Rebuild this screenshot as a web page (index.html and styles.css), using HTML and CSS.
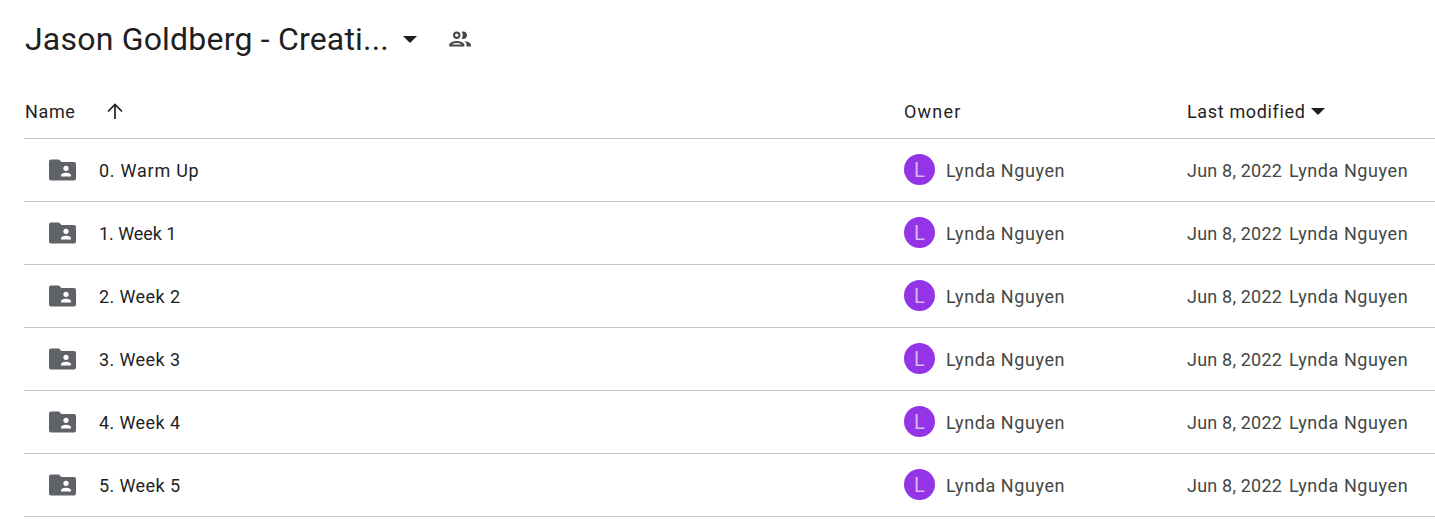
FILE: index.html
```html
<!DOCTYPE html>
<html lang="en">
<head>
<meta charset="utf-8">
<title>Jason Goldberg - Creative</title>
<link rel="stylesheet" href="styles.css">
</head>
<body>
<header class="crumb">
  <h1 class="title">Jason Goldberg - Creati...</h1>
  <svg class="title-caret" width="14" height="7" viewBox="0 0 14 7"><path d="M0 0h14L7 7z"/></svg>
  <svg class="people" width="26" height="26" viewBox="0 0 24 24"><path d="M9 13.750c-2.340 0-7 1.170-7 3.500V19h14v-1.750c0-2.330-4.660-3.500-7-3.500zM4.340 17c.84-.58 2.870-1.250 4.660-1.250s3.820.67 4.660 1.250H4.340zM9 12c1.930 0 3.500-1.570 3.500-3.500S10.930 5 9 5 5.500 6.570 5.500 8.500 7.070 12 9 12zm0-5c.83 0 1.500.67 1.500 1.500S9.830 10 9 10s-1.500-.67-1.500-1.500S8.170 7 9 7zm7.040 6.810c1.160.84 1.960 1.960 1.960 3.440V19h4v-1.750c0-2.020-3.500-3.170-5.960-3.440zM15 12c1.930 0 3.500-1.570 3.500-3.500S16.930 5 15 5c-.54 0-1.040.13-1.500.35.63.89 1 1.980 1 3.150s-.37 2.260-1 3.150c.46.22.96.35 1.500.35z"/></svg>
</header>
<main class="table">
  <div class="row head">
    <div class="name-cell">
      <span>Name</span>
      <svg class="arrow" width="18" height="18" viewBox="0 0 18 18"><path d="M9 17V2.500M2 9.500l7-7 7 7"/></svg>
    </div>
    <div class="owner-head">Owner</div>
    <div class="mod-head"><span>Last modified</span><svg width="14" height="7" viewBox="0 0 14 7"><path d="M0 0h14L7 7z"/></svg></div>
  </div>
  <div class="row item">
    <div class="name-cell"><svg class="folder" width="28" height="24" viewBox="0 0 28 24"><path class="f" d="M3 1.500h8L13.500 4H26a2 2 0 0 1 2 2v14.500a2 2 0 0 1-2 2H3a2 2 0 0 1-2-2v-17a2 2 0 0 1 2-2z"/><circle class="p" cx="18" cy="10.300" r="2.600"/><path class="p" d="M13 18.500v-1.200c0-1.600 3-2.500 5-2.500s5 .9 5 2.500v1.200z"/></svg><span class="label label-wide">0. Warm Up</span></div>
    <div class="owner"><span class="avatar">L</span><span>Lynda Nguyen</span></div>
    <div class="mod"><span class="date">Jun 8, 2022</span><span>Lynda Nguyen</span></div>
  </div>
  <div class="row item">
    <div class="name-cell"><svg class="folder" width="28" height="24" viewBox="0 0 28 24"><path class="f" d="M3 1.500h8L13.500 4H26a2 2 0 0 1 2 2v14.500a2 2 0 0 1-2 2H3a2 2 0 0 1-2-2v-17a2 2 0 0 1 2-2z"/><circle class="p" cx="18" cy="10.300" r="2.600"/><path class="p" d="M13 18.500v-1.200c0-1.600 3-2.500 5-2.500s5 .9 5 2.500v1.200z"/></svg><span class="label label-narrow">1. Week 1</span></div>
    <div class="owner"><span class="avatar">L</span><span>Lynda Nguyen</span></div>
    <div class="mod"><span class="date">Jun 8, 2022</span><span>Lynda Nguyen</span></div>
  </div>
  <div class="row item">
    <div class="name-cell"><svg class="folder" width="28" height="24" viewBox="0 0 28 24"><path class="f" d="M3 1.500h8L13.500 4H26a2 2 0 0 1 2 2v14.500a2 2 0 0 1-2 2H3a2 2 0 0 1-2-2v-17a2 2 0 0 1 2-2z"/><circle class="p" cx="18" cy="10.300" r="2.600"/><path class="p" d="M13 18.500v-1.200c0-1.600 3-2.500 5-2.500s5 .9 5 2.500v1.200z"/></svg><span class="label">2. Week 2</span></div>
    <div class="owner"><span class="avatar">L</span><span>Lynda Nguyen</span></div>
    <div class="mod"><span class="date">Jun 8, 2022</span><span>Lynda Nguyen</span></div>
  </div>
  <div class="row item">
    <div class="name-cell"><svg class="folder" width="28" height="24" viewBox="0 0 28 24"><path class="f" d="M3 1.500h8L13.500 4H26a2 2 0 0 1 2 2v14.500a2 2 0 0 1-2 2H3a2 2 0 0 1-2-2v-17a2 2 0 0 1 2-2z"/><circle class="p" cx="18" cy="10.300" r="2.600"/><path class="p" d="M13 18.500v-1.200c0-1.600 3-2.500 5-2.500s5 .9 5 2.500v1.200z"/></svg><span class="label">3. Week 3</span></div>
    <div class="owner"><span class="avatar">L</span><span>Lynda Nguyen</span></div>
    <div class="mod"><span class="date">Jun 8, 2022</span><span>Lynda Nguyen</span></div>
  </div>
  <div class="row item">
    <div class="name-cell"><svg class="folder" width="28" height="24" viewBox="0 0 28 24"><path class="f" d="M3 1.500h8L13.500 4H26a2 2 0 0 1 2 2v14.500a2 2 0 0 1-2 2H3a2 2 0 0 1-2-2v-17a2 2 0 0 1 2-2z"/><circle class="p" cx="18" cy="10.300" r="2.600"/><path class="p" d="M13 18.500v-1.200c0-1.600 3-2.500 5-2.500s5 .9 5 2.500v1.200z"/></svg><span class="label">4. Week 4</span></div>
    <div class="owner"><span class="avatar">L</span><span>Lynda Nguyen</span></div>
    <div class="mod"><span class="date">Jun 8, 2022</span><span>Lynda Nguyen</span></div>
  </div>
  <div class="row item">
    <div class="name-cell"><svg class="folder" width="28" height="24" viewBox="0 0 28 24"><path class="f" d="M3 1.500h8L13.500 4H26a2 2 0 0 1 2 2v14.500a2 2 0 0 1-2 2H3a2 2 0 0 1-2-2v-17a2 2 0 0 1 2-2z"/><circle class="p" cx="18" cy="10.300" r="2.600"/><path class="p" d="M13 18.500v-1.200c0-1.600 3-2.500 5-2.500s5 .9 5 2.500v1.200z"/></svg><span class="label">5. Week 5</span></div>
    <div class="owner"><span class="avatar">L</span><span>Lynda Nguyen</span></div>
    <div class="mod"><span class="date">Jun 8, 2022</span><span>Lynda Nguyen</span></div>
  </div>
</main>
</body>
</html>
```
FILE: styles.css
```css
* { box-sizing: border-box; }
html, body { margin: 0; padding: 0; background: #fff; overflow: hidden; }
body {
  font-family: Roboto, "Liberation Sans", sans-serif;
  color: #1f1f1f;
  font-size: 18px;
  letter-spacing: 0.58px;
}
.crumb {
  display: flex;
  align-items: center;
  height: 78px;
  padding-left: 25px;
}
.title {
  margin: 0;
  font-weight: 400;
  font-size: 32px;
  line-height: 40px;
  letter-spacing: 0.2px;
  color: #1f1f1f;
}
.title-caret { margin-left: 14px; fill: #1f1f1f; }
.people { margin-left: 30px; fill: #444746; }
.table { margin-left: 24px; }
.row {
  display: grid;
  grid-template-columns: 880px 283px 1fr;
  align-items: center;
  border-bottom: 1px solid #c7c7c7;
}
.head { height: 61px; padding-top: 6px; color: #1f1f1f; letter-spacing: 0.65px; }
.item { height: 63px; }
.name-cell { display: flex; align-items: center; }
.head .name-cell { padding-left: 1px; }
.arrow { margin-left: 30px; fill: none; stroke: #1f1f1f; stroke-width: 1.7; }
.owner-head { letter-spacing: 1.2px; }
.folder { margin-left: 24px; flex: none; }
.f { fill: #5f6368; }
.p { fill: #fff; }
.label { margin-left: 23px; letter-spacing: 0.4px; }
.label-wide { letter-spacing: 0.75px; }
.label-narrow { letter-spacing: -0.05px; }
.owner { display: flex; align-items: center; gap: 11px; color: #444746; }
.avatar {
  width: 31px;
  height: 31px;
  margin-top: -1px;
  border-radius: 50%;
  background: #9334e6;
  color: #d9b8f5;
  font-size: 20px;
  letter-spacing: 0;
  display: flex;
  align-items: center;
  justify-content: center;
  flex: none;
}
.mod-head { display: flex; align-items: center; gap: 5px; }
.mod-head svg { fill: #1f1f1f; }
.mod { display: flex; gap: 7px; color: #444746; white-space: nowrap; }
.date { letter-spacing: 0.2px; }
```
